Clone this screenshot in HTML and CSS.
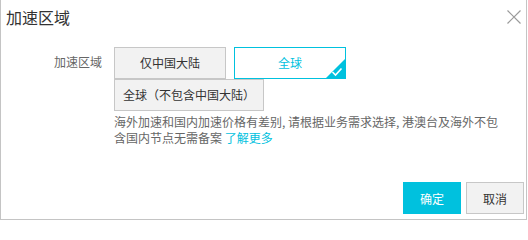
FILE: index.html
```html
<!DOCTYPE html>
<html lang="zh">
<head>
<meta charset="utf-8">
<title>加速区域</title>
<link rel="stylesheet" href="styles.css">
</head>
<body>
<div class="dialog">
  <div class="header">
    <div class="title">加速区域</div>
    <svg class="close" width="14" height="14" viewBox="0 0 14 14"><path d="M0.5 0.5L13.5 13.5M13.5 0.5L0.5 13.5" stroke="#9a9a9a" stroke-width="1.2" fill="none"/></svg>
  </div>
  <div class="body">
    <div class="row">
      <div class="label">加速区域</div>
      <div class="field">
        <div class="options">
          <div class="opt">仅中国大陆</div>
          <div class="opt selected">全球
            <svg class="corner" width="21" height="21" viewBox="0 0 21 21"><polygon points="21,0 21,21 0,21" fill="#00c1de"/><path d="M7.5 14L10.5 17L16.5 10.5" stroke="#fff" stroke-width="1.6" fill="none"/></svg>
          </div>
          <div class="opt wide">全球（不包含中国大陆）</div>
        </div>
        <div class="help">海外加速和国内加速价格有差别, 请根据业务需求选择, 港澳台及海外不包含国内节点无需备案 <a class="link" href="#">了解更多</a></div>
      </div>
    </div>
  </div>
  <div class="footer">
    <button class="btn primary">确定</button>
    <button class="btn">取消</button>
  </div>
</div>
</body>
</html>
```

FILE: styles.css
```css
html, body {
  margin: 0;
  padding: 0;
  background: #fff;
}
body {
  font-family: "Noto Sans CJK SC", "Noto Sans", "Liberation Sans", sans-serif;
  font-size: 12px;
  color: #333;
}
.dialog {
  width: 527px;
  height: 220px;
  box-sizing: border-box;
  border: 1px solid #c4c4c4;
  border-top: none;
  display: flex;
  flex-direction: column;
}
.header {
  display: flex;
  justify-content: space-between;
  align-items: center;
  padding: 5px 5px 0 5px;
}
.title {
  font-size: 16px;
  line-height: 24px;
  color: #333;
}
.close {
  display: block;
}
.body {
  margin-top: 18px;
}
.row {
  display: flex;
}
.label {
  width: 101px;
  margin-right: 12px;
  text-align: right;
  color: #666;
  line-height: 16px;
  padding-top: 7px;
}
.field {
  width: 388px;
}
.options {
  display: flex;
  flex-wrap: wrap;
}
.opt {
  position: relative;
  box-sizing: border-box;
  min-width: 112px;
  height: 32px;
  line-height: 30px;
  padding: 0 8px;
  margin-right: 8px;
  border: 1px solid #c7c7c7;
  background: #f2f2f2;
  color: #333;
  text-align: center;
}
.opt.selected {
  border-color: #00c1de;
  background: #fff;
  color: #00c1de;
}
.opt.wide {
  min-width: 0;
}
.corner {
  position: absolute;
  right: -1px;
  bottom: -1px;
  display: block;
}
.help {
  margin-top: 3px;
  line-height: 16px;
  color: #666;
}
.link {
  color: #00c1de;
  text-decoration: none;
}
.footer {
  margin-top: auto;
  display: flex;
  justify-content: flex-end;
  gap: 5px;
  padding: 0 2px 5px 0;
}
.btn {
  font-family: inherit;
  font-size: 12px;
  width: 58px;
  height: 32px;
  padding: 0;
  box-sizing: border-box;
  border: 1px solid #c7c7c7;
  background: #f2f2f2;
  color: #333;
}
.btn.primary {
  border-color: #00c1de;
  background: #00c1de;
  color: #fff;
}
```
